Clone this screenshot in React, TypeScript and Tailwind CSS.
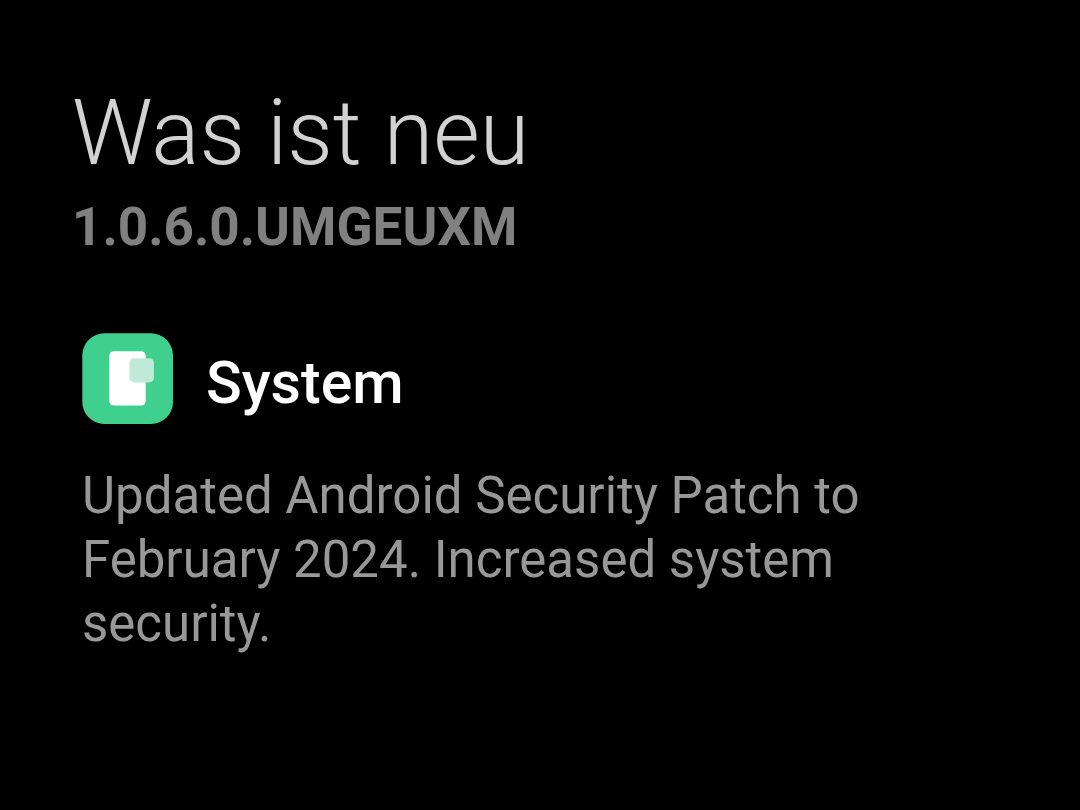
function SystemIcon({ className }: { className?: string }) {
  return (
    <svg viewBox="0 0 92 92" className={className} aria-hidden>
      <rect x="0.3" y="1.3" width="90.7" height="90.7" rx="22" fill="#3fcf8e" />
      <rect x="27.3" y="19.2" width="36.4" height="54.4" rx="4.5" fill="#fff" />
      <rect x="47.5" y="26.2" width="24.4" height="24.2" rx="4.5" fill="#bfead7" />
    </svg>
  );
}

export default function App() {
  return (
    <main className="min-h-screen bg-black px-[72px] pt-20 font-['Roboto',sans-serif]">
      <header>
        <h1 className="text-[90px] leading-[108px] font-light text-[#d2d2d2]">Was ist neu</h1>
        <p className="mt-2 text-[53px] leading-[62px] font-bold text-[#808080]">1.0.6.0.UMGEUXM</p>
      </header>

      <section className="mt-[74px] px-[10px]">
        <div className="flex items-end gap-8">
          <SystemIcon className="size-[92px] flex-none" />
          <h2 className="text-[59px] leading-[82px] font-medium text-white">System</h2>
        </div>
        <p className="mt-10 max-w-[800px] text-[51px] leading-16 text-[#989898]">
          Updated Android Security Patch to February 2024. Increased system security.
        </p>
      </section>
    </main>
  );
}
